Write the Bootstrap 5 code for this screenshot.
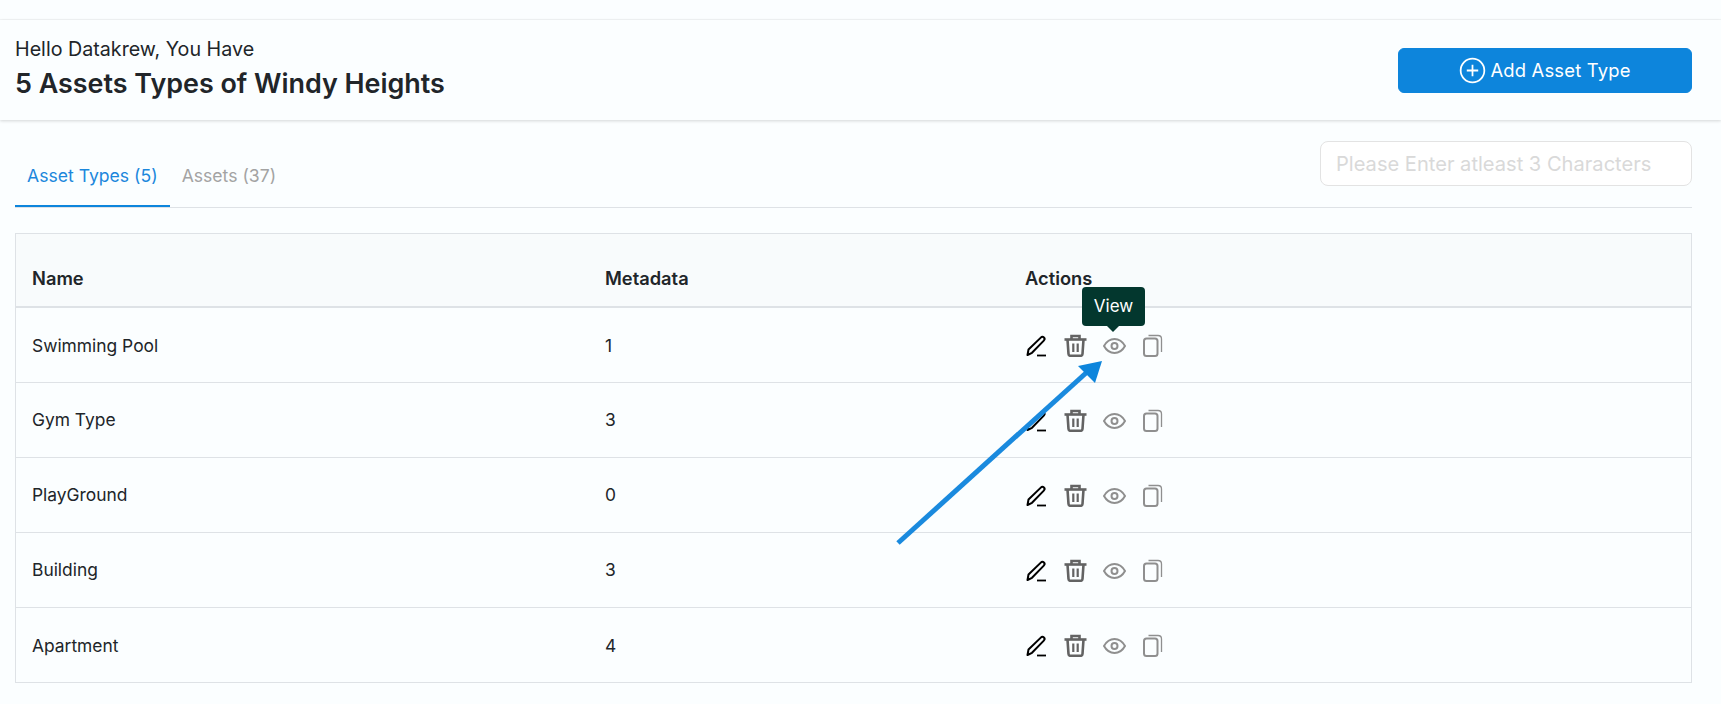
<!doctype html>
<html lang="en">
  <head>
    <meta charset="UTF-8" />
    <meta name="viewport" content="width=device-width, initial-scale=1.0" />
    <title>Asset Types</title>
    <link href="https://cdn.jsdelivr.net/npm/bootstrap@5.3.0/dist/css/bootstrap.min.css" rel="stylesheet" />
    <style>
      body {
        background: #fbfeff;
        font-family: Inter, "Liberation Sans", sans-serif;
        color: #212529;
        overflow: hidden;
      }
      .top-strip {
        height: 20px;
        border-bottom: 1px solid #f3f6f7;
      }
      .page-head {
        height: 100px;
        padding: 0 29px 0 15px;
        box-shadow: 0 1px 3px rgba(0, 0, 0, 0.16);
      }
      .hello-line {
        font-size: 19.7px;
        line-height: 24px;
        margin-top: 17px;
      }
      .head-title {
        font-size: 26.9px;
        line-height: 34px;
        font-weight: 600;
        margin: 5px 0 0;
      }
      .add-btn {
        width: 294px;
        height: 45px;
        margin-top: 28px;
        padding: 0;
        background: #0d85dc;
        border-color: #0d85dc;
        font-size: 18.4px;
        letter-spacing: 0.2px;
        border-radius: 6px;
      }
      .tab-row {
        margin: 20px 29px 0 15px;
        height: 68px;
        border-bottom: 1px solid #dee2e6;
      }
      .tab-link {
        display: block;
        height: 66px;
        padding: 23px 12px 0;
        font-size: 17.6px;
        line-height: 24px;
        color: #a3a3a3;
        text-decoration: none;
      }
      .tab-link.is-active {
        color: #1b87dc;
        border-bottom: 2px solid #0d85dc;
      }
      .search-box {
        width: 372px;
        height: 45px;
        margin-bottom: 21px;
        padding-left: 15px;
        background: #fff;
        font-size: 20.1px;
        border-radius: 8px;
        border-color: #e3e3e3;
      }
      .search-box::placeholder {
        color: #d9d9d9;
      }
      .asset-box {
        margin: 25px 29px 0 15px;
        border: 1px solid #dee2e6;
      }
      .asset-table {
        --bs-table-bg: transparent;
        table-layout: fixed;
        margin: 0;
        font-size: 17.4px;
      }
      .asset-table th {
        height: 73px;
        padding: 16px 16px 0;
        background: #f8fbfc;
        font-weight: 600;
        font-size: 18.3px;
        line-height: 24px;
        vertical-align: middle;
        border-bottom: 2px solid #dee2e6;
      }
      .asset-table td {
        height: 75px;
        padding: 2px 16px 0;
        vertical-align: middle;
        border-color: #dee2e6;
      }
      .asset-table tr:last-child td {
        border-bottom: 0;
      }
      .col-name { width: 573px; }
      .col-meta { width: 420px; }
      .action-icons {
        position: relative;
        gap: 17px;
        height: 24px;
        left: 1px;
      }
      .eye-icon {
        margin-left: -1px;
      }
      .view-tip {
        position: absolute;
        left: 56px;
        top: -47px;
        width: 63px;
        height: 39px;
        background: #03372e;
        color: #fff;
        font-size: 17px;
        line-height: 39px;
        text-align: center;
        border-radius: 4px;
      }
      .view-tip::after {
        content: "";
        position: absolute;
        left: 25px;
        bottom: -6px;
        border-left: 6px solid transparent;
        border-right: 6px solid transparent;
        border-top: 6px solid #03372e;
      }
      .arrow-over {
        position: absolute;
        left: 0;
        top: 0;
        pointer-events: none;
      }
    </style>
  </head>
  <body>
    <div class="top-strip"></div>

    <!-- Header -->
    <div class="page-head d-flex justify-content-between align-items-start">
      <div>
        <div class="hello-line">Hello Datakrew, You Have</div>
        <h1 class="head-title">5 Assets Types of Windy Heights</h1>
      </div>
      <button type="button" class="btn btn-primary add-btn d-flex align-items-center justify-content-center gap-1">
        <svg width="27" height="27" viewBox="0 0 26 26" fill="none" stroke="#fff" stroke-width="1.7">
          <circle cx="13" cy="13" r="11.4" />
          <path d="M13 7.5v11M7.5 13h11" />
        </svg>
        Add Asset Type
      </button>
    </div>

    <!-- Tabs -->
    <div class="tab-row d-flex justify-content-between align-items-end">
      <div class="d-flex">
        <a class="tab-link is-active" href="#">Asset Types (5)</a>
        <a class="tab-link" href="#">Assets (37)</a>
      </div>
      <input type="text" class="form-control search-box" placeholder="Please Enter atleast 3 Characters" />
    </div>

    <!-- Table -->
    <div class="asset-box">
      <table class="table asset-table">
        <thead>
          <tr>
            <th class="col-name">Name</th>
            <th class="col-meta">Metadata</th>
            <th>Actions</th>
          </tr>
        </thead>
        <tbody id="asset-rows"></tbody>
      </table>
    </div>

    <!-- Annotation arrow -->
    <svg class="arrow-over" width="1721" height="704" viewBox="0 0 1721 704">
      <path d="M898 543L1086 373" stroke="#1a8ade" stroke-width="5" fill="none" />
      <path d="M1102 361L1078 366L1095 383Z" fill="#0d85dc" />
    </svg>

    <script>
      const rows = [
        ["Swimming Pool", 1],
        ["Gym Type", 3],
        ["PlayGround", 0],
        ["Building", 3],
        ["Apartment", 4],
      ];

      const pen = `<svg width="21" height="22" viewBox="0 0 21 22" fill="none" stroke="#000" stroke-width="2" stroke-linejoin="round"><path d="M1.5 20l1-5.500L14.800 2.600c1-1 2.200-1 3.100-.1s.9 2.100-.1 3.100L6 17.800z"/><path d="M11 20.500h9" stroke-width="1.800"/></svg>`;
      const trash = `<svg width="23" height="23" viewBox="0 0 23 23" fill="none" stroke="#636363" stroke-width="2.600"><path d="M.5 5.500h22"/><path d="M7.500 5V2h8v3"/><path d="M3.500 5.500l1 14.500c.1 1.200.9 1.800 2 1.800h10c1.100 0 1.900-.6 2-1.800l1-14.500"/><path d="M9.300 9.500v8.500M13.700 9.500v8.500" stroke-width="2.200"/></svg>`;
      const eye = `<svg class="eye-icon" width="23" height="16" viewBox="0 0 23 16" fill="none" stroke="#8f8f8f" stroke-width="2"><path d="M1 8c2.500-4.500 6-7 10.500-7S19.500 3.500 22 8c-2.500 4.500-6 7-10.500 7S3.500 12.500 1 8z"/><circle cx="11.500" cy="8" r="3"/></svg>`;
      const copy = `<svg width="20" height="23" viewBox="0 0 20 23" fill="none" stroke="#8f8f8f"><rect x="1" y="4.500" width="13.500" height="17.500" rx="2.500" stroke-width="2"/><path d="M5.500 1.500h9.500c2 0 3.500 1.500 3.500 3.500v13" stroke-width="1.300"/></svg>`;

      document.getElementById("asset-rows").innerHTML = rows
        .map(
          ([name, meta], i) => `<tr>
            <td>${name}</td>
            <td>${meta}</td>
            <td>
              <div class="action-icons d-flex align-items-center">
                ${pen}${trash}${eye}${copy}
                ${i === 0 ? '<div class="view-tip">View</div>' : ""}
              </div>
            </td>
          </tr>`
        )
        .join("");
    </script>
    <script src="https://cdn.jsdelivr.net/npm/bootstrap@5.3.0/dist/js/bootstrap.bundle.min.js"></script>
  </body>
</html>
